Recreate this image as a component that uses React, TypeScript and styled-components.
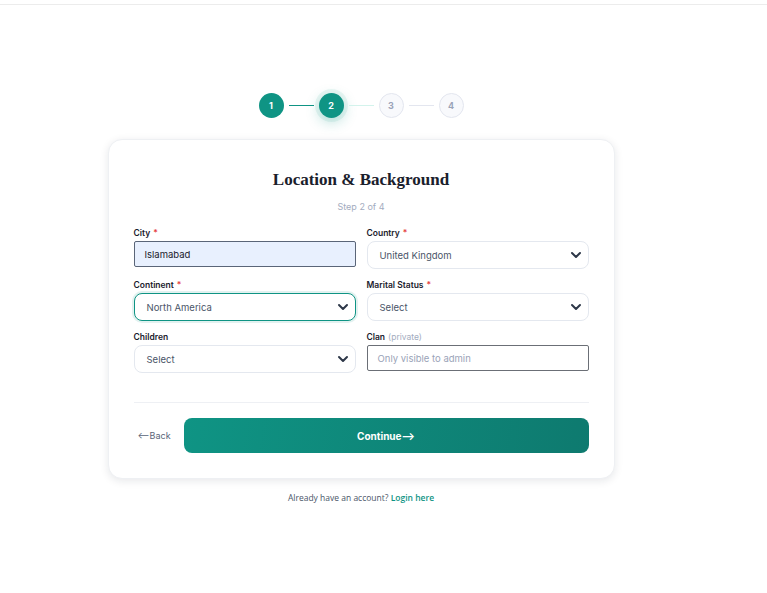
import React from "react";
import styled, { createGlobalStyle, css } from "styled-components";

const GlobalStyle = createGlobalStyle`
  html, body {
    margin: 0;
    padding: 0;
    background: #fff;
    font-family: Inter, "Noto Sans", sans-serif;
  }
  * { box-sizing: border-box; }
`;

const TopBar = styled.div`
  height: 5px;
  border-bottom: 1px solid #ececec;
`;

const Main = styled.main`
  width: 722px;
  display: flex;
  flex-direction: column;
  align-items: center;
  padding-top: 88px;
`;

const Stepper = styled.div`
  display: flex;
  align-items: center;
  margin-bottom: 21px;
`;

const StepDot = styled.div<{ $state: "done" | "active" | "todo" }>`
  width: 25px;
  height: 25px;
  border-radius: 50%;
  display: flex;
  align-items: center;
  justify-content: center;
  font-size: 9px;
  font-weight: 700;
  ${(p) =>
    p.$state === "todo"
      ? css`
          background: #f8f9fc;
          border: 1px solid #e3e6ef;
          color: #9aa3b8;
        `
      : css`
          background: #0f9484;
          color: #fff;
        `}
  ${(p) =>
    p.$state === "active" &&
    css`
      box-shadow: 0 0 0 4px rgba(15, 148, 132, 0.08), 0 4px 14px rgba(15, 148, 132, 0.3);
    `}
`;

const StepLine = styled.div<{ $color: string }>`
  width: 25px;
  height: 1px;
  margin: 0 5px;
  background: ${(p) => p.$color};
`;

const Card = styled.div`
  width: 507px;
  background: #fff;
  border: 1px solid #eef0f3;
  border-radius: 14px;
  box-shadow: 0 2px 8px rgba(20, 30, 50, 0.1);
  padding: 30px 25px 25px;
`;

const Title = styled.h1`
  margin: 0;
  text-align: center;
  font-family: "Liberation Serif", "DejaVu Serif", serif;
  font-size: 17px;
  line-height: 20px;
  font-weight: 700;
  color: #1a202c;
`;

const Subtitle = styled.p`
  margin: 11px 0 16px;
  text-align: center;
  font-size: 9px;
  color: #a3acc0;
`;

const Grid = styled.div`
  display: grid;
  grid-template-columns: 1fr 1fr;
  column-gap: 11px;
  row-gap: 11px;
`;

const Field = styled.div`
  display: flex;
  flex-direction: column;
  gap: 3px;
`;

const Label = styled.label`
  font-size: 8.5px;
  font-weight: 600;
  color: #1a202c;
  display: flex;
  gap: 3px;
`;

const Req = styled.span`
  color: #e53e3e;
`;

const Muted = styled.span`
  color: #a3acc0;
  font-weight: 400;
`;

const TextInput = styled.div<{ $variant: "autofill" | "plain" }>`
  height: 26px;
  display: flex;
  align-items: center;
  padding: 0 10px;
  font-size: 9.5px;
  ${(p) =>
    p.$variant === "autofill"
      ? css`
          background: #e8f0fe;
          border: 1px solid #5a6578;
          border-radius: 2px;
          color: #1a202c;
        `
      : css`
          background: #fff;
          border: 1px solid #6b6f76;
          border-radius: 2px;
          color: #9aa3b8;
        `}
`;

const SelectBox = styled.div<{ $focused?: boolean }>`
  height: 28px;
  display: flex;
  align-items: center;
  justify-content: space-between;
  padding: 0 6px 0 12px;
  border-radius: 8px;
  font-size: 9.5px;
  color: #4a5568;
  background: #fff;
  border: 1px solid #e4e8ef;
  ${(p) =>
    p.$focused &&
    css`
      border: 1px solid #0f9484;
      box-shadow: 0 0 0 2px rgba(15, 148, 132, 0.12);
    `}
`;

const Chevron = () => (
  <svg width="12" height="12" viewBox="0 0 12 12">
    <path d="M2 4 L6 8 L10 4" fill="none" stroke="#2d3748" strokeWidth="2" strokeLinecap="round" strokeLinejoin="round" />
  </svg>
);

const Divider = styled.hr`
  border: none;
  border-top: 1px solid #eef0f4;
  margin: 29px 0 15px;
`;

const Actions = styled.div`
  display: flex;
  align-items: center;
  gap: 12px;
`;

const BackButton = styled.button`
  border: none;
  background: none;
  padding: 0 0 0 4px;
  font-family: inherit;
  font-size: 9px;
  color: #5a6578;
  width: 38px;
  text-align: left;
  white-space: nowrap;
`;

const ContinueButton = styled.button`
  flex: 1;
  height: 35px;
  border: none;
  border-radius: 8px;
  background: linear-gradient(100deg, #0f9484 0%, #0e7a6f 100%);
  color: #fff;
  font-family: inherit;
  font-weight: 700;
  font-size: 10px;
`;

const Footer = styled.p`
  margin: 13px 0 0;
  font-family: "Open Sans", sans-serif;
  font-size: 8.5px;
  color: #4a5568;
`;

const LoginLink = styled.a`
  color: #0f9484;
  font-weight: 600;
  text-decoration: none;
`;

const steps: Array<"done" | "active" | "todo"> = ["done", "active", "todo", "todo"];
const lineColors = ["#0f9484", "#d3f3ec", "#e3e6ef"];

export default function App() {
  return (
    <>
      <GlobalStyle />
      <TopBar />
      <Main>
        <Stepper>
          {steps.map((s, i) => (
            <React.Fragment key={i}>
              <StepDot $state={s}>{i + 1}</StepDot>
              {i < 3 && <StepLine $color={lineColors[i]} />}
            </React.Fragment>
          ))}
        </Stepper>
        <Card>
          <Title>Location &amp; Background</Title>
          <Subtitle>Step 2 of 4</Subtitle>
          <Grid>
            <Field>
              <Label>City<Req>*</Req></Label>
              <TextInput $variant="autofill">Islamabad</TextInput>
            </Field>
            <Field>
              <Label>Country<Req>*</Req></Label>
              <SelectBox>United Kingdom<Chevron /></SelectBox>
            </Field>
            <Field>
              <Label>Continent<Req>*</Req></Label>
              <SelectBox $focused>North America<Chevron /></SelectBox>
            </Field>
            <Field>
              <Label>Marital Status<Req>*</Req></Label>
              <SelectBox>Select<Chevron /></SelectBox>
            </Field>
            <Field>
              <Label>Children</Label>
              <SelectBox>Select<Chevron /></SelectBox>
            </Field>
            <Field>
              <Label>Clan<Muted>(private)</Muted></Label>
              <TextInput $variant="plain">Only visible to admin</TextInput>
            </Field>
          </Grid>
          <Divider />
          <Actions>
            <BackButton>⟵Back</BackButton>
            <ContinueButton>Continue⟶</ContinueButton>
          </Actions>
        </Card>
        <Footer>
          Already have an account? <LoginLink href="#">Login here</LoginLink>
        </Footer>
      </Main>
    </>
  );
}
